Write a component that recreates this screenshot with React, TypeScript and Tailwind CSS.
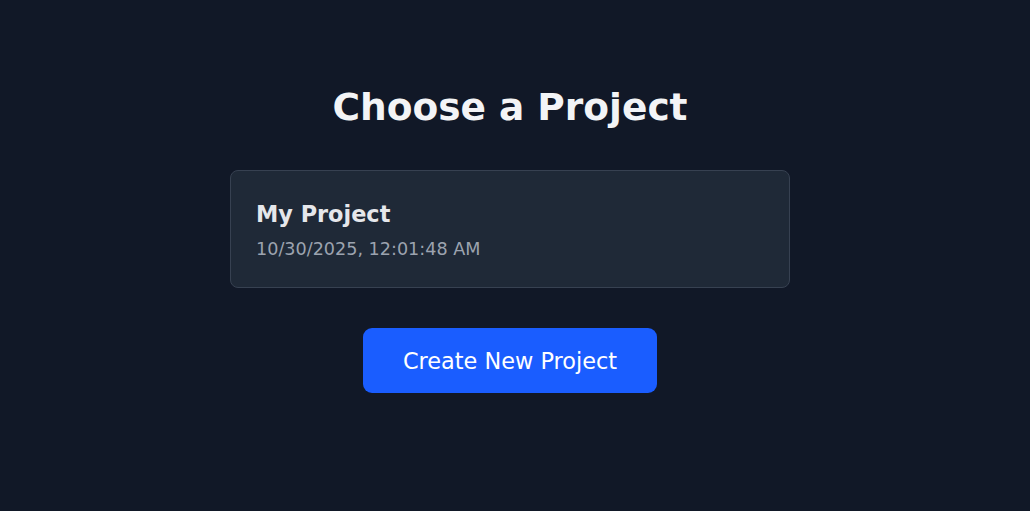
const projects = [{ name: "My Project", created: "10/30/2025, 12:01:48 AM" }];

export default function App() {
  return (
    <div className="min-h-[511px] w-full bg-[#111827] font-['DejaVu_Sans',sans-serif]">
      <div className="flex flex-col items-center pt-[85px] pr-[10px]">
        <h1 className="text-[37.5px] font-bold leading-[45px] text-[#f3f4f6] mb-10">Choose a Project</h1>

        {/* PROJECT LIST */}
        <div className="w-[560px] flex flex-col gap-4">
          {projects.map((p) => (
            <div key={p.name} className="rounded-lg border border-[#374151] bg-[#1f2937] px-[25px] pt-[29px] pb-[26px] flex flex-col gap-[9px]">
              <h2 className="text-[22.4px] font-bold leading-7 text-[#e5e7eb]">{p.name}</h2>
              <p className="text-[17.6px] leading-6 text-[#9ca3af]">{p.created}</p>
            </div>
          ))}
        </div>

        <button className="mt-10 h-[65px] rounded-[9px] bg-[#1a5dff] px-10 text-[22.4px] leading-[34px] text-white">
          Create New Project
        </button>
      </div>
    </div>
  );
}
